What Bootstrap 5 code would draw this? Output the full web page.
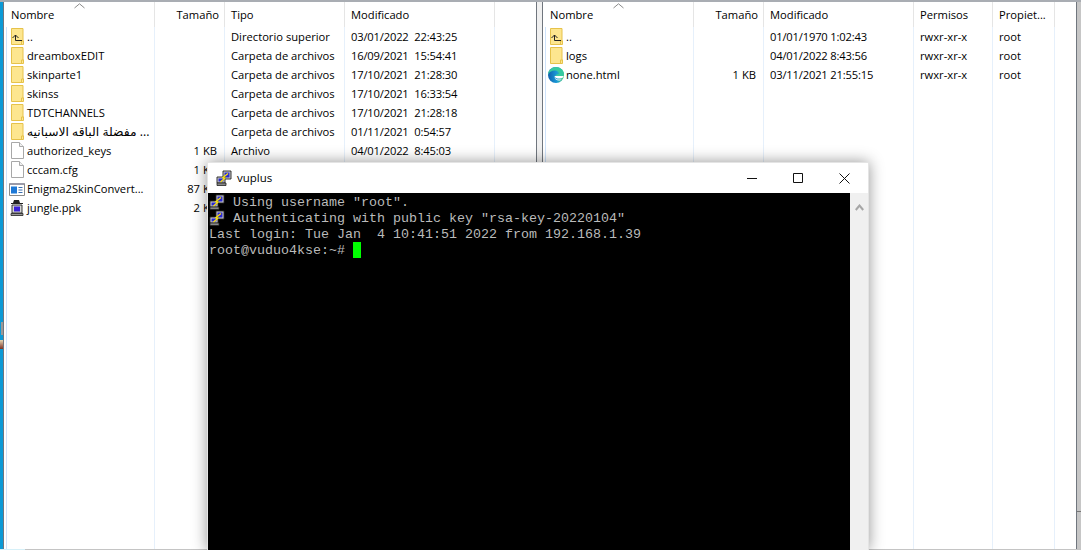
<!DOCTYPE html>
<html lang="es">
<head>
<meta charset="utf-8">
<title>WinSCP</title>
<link href="https://cdn.jsdelivr.net/npm/bootstrap@5.3.0/dist/css/bootstrap.min.css" rel="stylesheet">
<style>
html,body{height:550px;overflow:hidden}
body{background:#f0f0f0;font-family:"Open Sans","Noto Sans","DejaVu Sans",sans-serif;font-size:11.2px;color:#000;position:relative}
.desk{height:549px;border-top:2px solid #a9adb3}
.edge-l{width:3px;background:#0c9ad6;flex:none}
.edge-r{width:4px;background:#c6c6c6;flex:none}
.pane{background:#fff;height:100%;position:relative;overflow:hidden}
.pane-a{width:534px;flex:none;border-left:1px solid #70767e;border-right:1px solid #70767e}
.pane-b{width:535px;flex:none;border-left:1px solid #70767e;border-right:1px solid #70767e}
.gapper{width:5px;flex:none;background:#f0f0f0}
.lv{table-layout:fixed;height:547px;margin:0 0 0 2px;border-collapse:separate;border-spacing:0;--bs-table-bg:transparent;--bs-table-color:#000}
.lv-a{width:529px}
.lv-b{width:531px}
.lv th{font-weight:400;height:25px;padding:2px 6px 0;vertical-align:middle;border-right:1px solid #e5e5e5;white-space:nowrap;position:relative;overflow:hidden}
.lv td{height:19px;line-height:19px;padding:0 6px;vertical-align:middle;border-right:1px solid #e6f0fb;white-space:nowrap;overflow:hidden}
.lv td:first-child{border-left:1px solid #cfe3fb;padding-left:4px}
.lv th:first-child{border-left:1px solid transparent;padding-left:4px}
.lv th:last-child,.lv td:last-child{border-right:0}
.lv th.text-end{padding-right:5px}
.lv td.text-end{padding-right:7px}
.lv .fill td{height:auto}
.nm{display:flex;align-items:center;gap:3px}
.nm svg{flex:none}
.wide-ic{margin-left:-2px;margin-right:-1px}
.ar{font-size:12.3px}
.dt{letter-spacing:-.18px}
.dt2{letter-spacing:-.18px;word-spacing:3px}
.chev{position:absolute;top:1px;left:70px}
.win{position:absolute;left:207px;top:162px;width:662px;height:388px;background:#fff;box-shadow:0 0 14px rgba(0,0,0,.42);border:1px solid #e4e4e4;border-bottom:0;display:flex;flex-direction:column}
.win-t{height:30px;flex:none;padding-left:8px;gap:5px}
.win-n{font-size:11.5px;color:#000}
.win-c{margin-left:auto;margin-right:1px}
.win-c span{display:flex;width:46px;height:30px;align-items:center;justify-content:center}
.term{background:#000;color:#bbb;font-family:"Liberation Mono",monospace;font-size:13.33px;line-height:16px;padding:2px 0 0 1px;white-space:pre;flex:1 1 auto;overflow:hidden}
.term-l{height:16px;display:block}
.term-l svg{vertical-align:top;margin-top:-1px}
.cur{display:inline-block;width:8px;height:16px;background:#0f0;vertical-align:top;margin-left:8px;margin-top:-1px}
.sb{width:18px;flex:none;background:#f0f0f0;text-align:center;padding-top:5px}
.strip{position:absolute;left:0;bottom:0;right:0;height:1px;background:#c4c4c4}
.strip-a{position:absolute;left:0;bottom:0;width:25px;height:1px;background:#d6f0f8}
.tk{position:absolute;background:#9a9a9a;left:1px;width:2px}
.tk-b{position:absolute;left:0;width:3px;height:9px;top:340px;background:linear-gradient(#e7d7b4,#7c2f22)}
.tk-r{position:absolute;right:0;top:511px;width:4px;height:1px;background:#777}
</style>
</head>
<body>
<svg width="0" height="0" class="position-absolute">
<defs>
<symbol id="fold" viewBox="0 0 13 17"><path d="M.5.5h11.5v12.5h.5v3.500H.5z" fill="#fde68f" stroke="#e6c24a"/><path d="M10.500 16.500v-3.500h2" fill="none" stroke="#e6c24a"/></symbol>
<symbol id="updir" viewBox="0 0 13 17"><use href="#fold"/><path d="M1.500 10 4.500 7l3 3M4.500 7v5.500H11" fill="none" stroke="#222"/></symbol>
<symbol id="doc" viewBox="0 0 13 17"><path d="M.5.5h8l4 4v12H.5z" fill="#fff" stroke="#a8a8a8"/><path d="M8.500.5v4h4" fill="#f0f0f0" stroke="#a8a8a8"/></symbol>
<symbol id="putty" viewBox="0 0 16 16"><path d="M7 1h8v8H7z" fill="#c8c8c8" stroke="#222" stroke-width=".9"/><path d="M8.500 2.500h5v5h-5z" fill="#2a2ad0"/><path d="M1 7h8v6H1z" fill="#c8c8c8" stroke="#222" stroke-width=".9"/><path d="M2.500 8.500h5v3h-5z" fill="#2a2ad0"/><path d="M1 13h9v2.500H1z" fill="#888" stroke="#222" stroke-width=".8"/><path d="M12 3.500 7 7.500l2 .5L4.500 12" fill="none" stroke="#ffe600" stroke-width="1.200"/></symbol>
</defs>
</svg>
<div class="desk d-flex">
  <div class="edge-l"></div>
  <div class="pane pane-a">
    <svg class="chev" width="11" height="6" viewBox="0 0 11 6"><path d="M.5 5 5.500.8 10.500 5" fill="none" stroke="#8b8b8b"/></svg>
    <table class="table table-borderless lv lv-a">
      <colgroup><col style="width:149px"><col style="width:70px"><col style="width:120px"><col style="width:150px"><col style="width:40px"></colgroup>
      <thead><tr><th>Nombre</th><th class="text-end">Tamaño</th><th>Tipo</th><th>Modificado</th><th></th></tr></thead>
      <tbody>
        <tr><td><div class="nm"><svg width="13" height="17"><use href="#updir"/></svg>..</div></td><td></td><td>Directorio superior</td><td class="dt2">03/01/2022 22:43:25</td><td></td></tr>
        <tr><td><div class="nm"><svg width="13" height="17"><use href="#fold"/></svg>dreamboxEDIT</div></td><td></td><td>Carpeta de archivos</td><td class="dt2">16/09/2021 15:54:41</td><td></td></tr>
        <tr><td><div class="nm"><svg width="13" height="17"><use href="#fold"/></svg>skinparte1</div></td><td></td><td>Carpeta de archivos</td><td class="dt2">17/10/2021 21:28:30</td><td></td></tr>
        <tr><td><div class="nm"><svg width="13" height="17"><use href="#fold"/></svg>skinss</div></td><td></td><td>Carpeta de archivos</td><td class="dt2">17/10/2021 16:33:54</td><td></td></tr>
        <tr><td><div class="nm"><svg width="13" height="17"><use href="#fold"/></svg>TDTCHANNELS</div></td><td></td><td>Carpeta de archivos</td><td class="dt2">17/10/2021 21:28:18</td><td></td></tr>
        <tr><td><div class="nm"><svg width="13" height="17"><use href="#fold"/></svg><span class="ar">مفضلة  الباقه الاسبانيه ...</span></div></td><td></td><td>Carpeta de archivos</td><td class="dt2">01/11/2021 0:54:57</td><td></td></tr>
        <tr><td><div class="nm"><svg width="13" height="17"><use href="#doc"/></svg>authorized_keys</div></td><td class="text-end">1 KB</td><td>Archivo</td><td class="dt2">04/01/2022 8:45:03</td><td></td></tr>
        <tr><td><div class="nm"><svg width="13" height="17"><use href="#doc"/></svg>cccam.cfg</div></td><td class="text-end">1 KB</td><td></td><td></td><td></td></tr>
        <tr><td><div class="nm"><svg class="wide-ic" width="16" height="14" viewBox="0 0 16 14"><path d="M.5 1.500h15v12H.5z" fill="#fff" stroke="#8a8a8a"/><path d="M1 1h14v2H1z" fill="#9a9aa8"/><path d="M2 4.500h6v7H2z" fill="#1d78d6"/><path d="M9.500 5.500h4M9.500 8h4M9.500 10.500h4" stroke="#3a6fb0"/></svg>Enigma2SkinConvert...</div></td><td class="text-end">87 KB</td><td></td><td></td><td></td></tr>
        <tr><td><div class="nm"><svg class="wide-ic" width="16" height="17" viewBox="0 0 16 17"><path d="M4 4 5 1h5l1 3h3v1H2V4z" fill="#222"/><path d="M3 6h10v8H3z" fill="#d6d6d6" stroke="#222" stroke-width=".9"/><path d="M5 7.500h6v5H5z" fill="#3a20d8"/><path d="M2 14.500h12v2H2z" fill="#999" stroke="#222" stroke-width=".8"/></svg>jungle.ppk</div></td><td class="text-end">2 KB</td><td></td><td></td><td></td></tr>
        <tr class="fill"><td></td><td></td><td></td><td></td><td></td></tr>
      </tbody>
    </table>
  </div>
  <div class="gapper"></div>
  <div class="pane pane-b">
    <svg class="chev" width="11" height="6" viewBox="0 0 11 6"><path d="M.5 5 5.500.8 10.500 5" fill="none" stroke="#8b8b8b"/></svg>
    <table class="table table-borderless lv lv-b">
      <colgroup><col style="width:149px"><col style="width:70px"><col style="width:150px"><col style="width:79px"><col style="width:62px"><col style="width:21px"></colgroup>
      <thead><tr><th>Nombre</th><th class="text-end">Tamaño</th><th>Modificado</th><th>Permisos</th><th>Propiet...</th><th></th></tr></thead>
      <tbody>
        <tr><td><div class="nm"><svg width="13" height="17"><use href="#updir"/></svg>..</div></td><td></td><td class="dt">01/01/1970 1:02:43</td><td>rwxr-xr-x</td><td>root</td><td></td></tr>
        <tr><td><div class="nm"><svg width="13" height="17"><use href="#fold"/></svg>logs</div></td><td></td><td class="dt">04/01/2022 8:43:56</td><td>rwxr-xr-x</td><td>root</td><td></td></tr>
        <tr><td><div class="nm"><svg class="wide-ic" width="16" height="16" viewBox="0 0 16 16"><defs><linearGradient id="eg" x1="0" y1="0" x2="1" y2="0"><stop offset="0" stop-color="#0f5fae"/><stop offset=".55" stop-color="#1a9ad6"/><stop offset="1" stop-color="#4fd07a"/></linearGradient></defs><circle cx="8" cy="8" r="8" fill="url(#eg)"/><path d="M0 8C0 3 4 0 8 0c5 0 8 4 8 7 0 2-2 3-4 3H7c0-2 2-3 4-3 0-2-2-3.500-4-3.500C3.500 3.500 1 5 0 8z" fill="#37c9a0"/><path d="M6.500 9.500c0 3 3 4.500 6 3.700L14 12c-1.500 1-7 1-7.500-2.500z" fill="#fff"/><path d="M6.500 9h9c0 1-1 2.500-4 2.500S7 11 6.500 9z" fill="#fff"/></svg>none.html</div></td><td class="text-end">1 KB</td><td class="dt">03/11/2021 21:55:15</td><td>rwxr-xr-x</td><td>root</td><td></td></tr>
        <tr class="fill"><td></td><td></td><td></td><td></td><td></td><td></td></tr>
      </tbody>
    </table>
  </div>
  <div class="edge-r"></div>
</div>
<div class="tk" style="top:322px;height:13px"></div>
<div class="tk-b"></div>
<div class="tk-r"></div>
<div class="strip"></div>
<div class="strip-a"></div>
<div class="win">
  <div class="win-t d-flex align-items-center">
    <svg width="16" height="16"><use href="#putty"/></svg>
    <span class="win-n">vuplus</span>
    <div class="win-c d-flex">
      <span><svg width="10" height="10" viewBox="0 0 10 10"><path d="M0 5.500h10" stroke="#111"/></svg></span>
      <span><svg width="10" height="10" viewBox="0 0 10 10"><path d="M.5.5h9v9h-9z" fill="none" stroke="#111"/></svg></span>
      <span><svg width="11" height="11" viewBox="0 0 11 11"><path d="M.5.5l10 10M10.500.5l-10 10" stroke="#111"/></svg></span>
    </div>
  </div>
  <div class="d-flex flex-grow-1 overflow-hidden">
    <div class="term"><span class="term-l"><svg width="16" height="16"><use href="#putty"/></svg> Using username "root".</span><span class="term-l"><svg width="16" height="16"><use href="#putty"/></svg> Authenticating with public key "rsa-key-20220104"</span><span class="term-l">Last login: Tue Jan  4 10:41:51 2022 from 192.168.1.39</span><span class="term-l">root@vuduo4kse:~#<span class="cur"></span></span></div>
    <div class="sb"><svg width="9" height="7" viewBox="0 0 9 7"><path d="M.8 6 4.500 1.500 8.200 6" fill="none" stroke="#a6a6a6" stroke-width="2"/></svg></div>
  </div>
</div>
<script src="https://cdn.jsdelivr.net/npm/bootstrap@5.3.0/dist/js/bootstrap.bundle.min.js"></script>
</body>
</html>
